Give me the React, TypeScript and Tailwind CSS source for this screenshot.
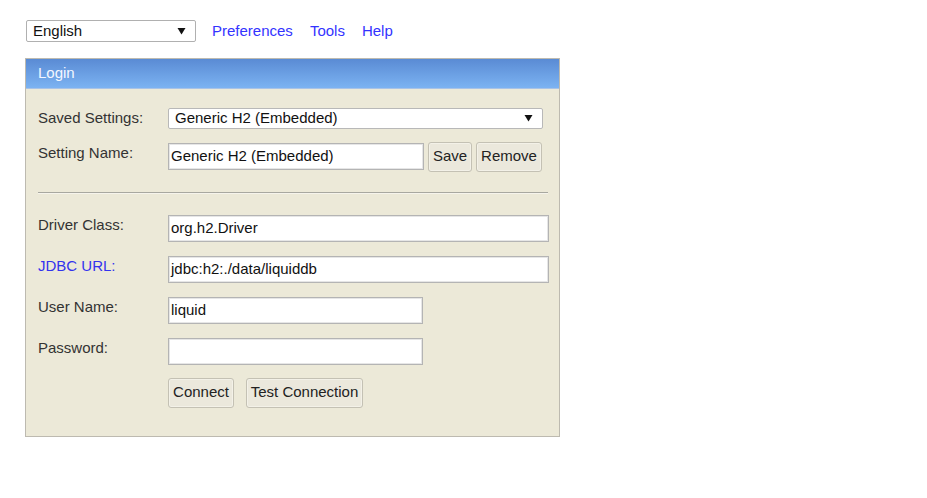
import React from "react";

const font = { fontFamily: '"Liberation Sans", Arial, sans-serif' };

function Arrow() {
  return (
    <svg width="9" height="8" viewBox="0 0 9 8" className="absolute right-[9px] top-1/2 -translate-y-1/2">
      <path d="M0.5 1 L8.5 1 L4.5 7.5 Z" fill="#111" />
    </svg>
  );
}

function Label({ children, blue }: { children: React.ReactNode; blue?: boolean }) {
  return (
    <div className={`w-[130px] shrink-0 leading-[18px] pt-[1px] ${blue ? "text-[#3333ee]" : "text-[#333]"}`}>
      {children}
    </div>
  );
}

function Input({ value, w }: { value: string; w: string }) {
  return (
    <div
      className={`${w} h-[27px] bg-white border border-[#b4b4b4] shadow-[inset_0_0_0_1px_#e6e6e6] flex items-center pl-[2px] text-[#111] text-[15px]`}
    >
      {value}
    </div>
  );
}

function Btn({ children, w }: { children: React.ReactNode; w: string }) {
  return (
    <div
      className={`${w} h-[30px] rounded-[3px] border border-[#c4c1b4] bg-[#ebe8dc] shadow-[inset_0_0_0_1px_#f3f1e8] flex items-center justify-center text-[#222] text-[15px]`}
    >
      {children}
    </div>
  );
}

export default function App() {
  return (
    <div className="w-[927px] h-[498px] bg-white text-[15px]" style={font}>
      <div className="pt-[20px] pl-[26px] flex items-center">
        <div className="relative w-[170px] h-[22px] border border-[#b0b0b0] rounded-[2px] bg-white flex items-center pl-[6px] text-[#111]">
          English
          <Arrow />
        </div>
        <div className="flex items-center text-[#3333ff] ml-[16px] gap-[17px]">
          <span>Preferences</span>
          <span>Tools</span>
          <span>Help</span>
        </div>
      </div>

      <div className="mt-[15px] ml-[25px] w-[535px] h-[379px] border border-[#bdbab0] bg-[#ece9d8] flex flex-col">
        <div className="h-[30px] bg-gradient-to-b from-[#5a8bd4] to-[#7cb3f2] border-b border-[#a9c3e6] flex items-center pl-[12px] text-[#f4f7ff] text-[15px]">
          Login
        </div>
        <div className="pl-[12px] pt-[19px] flex flex-col">
          <div className="flex">
            <Label>Saved Settings:</Label>
            <div className="relative w-[375px] h-[21px] bg-white border border-[#b8b8b8] rounded-[2px] flex items-center pl-[6px] text-[#111]">
              Generic H2 (Embedded)
              <Arrow />
            </div>
          </div>

          <div className="flex mt-[13px]">
            <div className="pt-[1px]">
              <Label>Setting Name:</Label>
            </div>
            <div className="mt-[1px]">
              <Input value="Generic H2 (Embedded)" w="w-[256px]" />
            </div>
            <div className="ml-[4px]">
              <Btn w="w-[44px]">Save</Btn>
            </div>
            <div className="ml-[4px]">
              <Btn w="w-[66px]">Remove</Btn>
            </div>
          </div>

          <div className="mt-[20px] w-[510px] h-[2px] border-t border-[#a8a8a0] border-b border-b-[#f6f4ec]" />

          <div className="flex mt-[21px]">
            <Label>Driver Class:</Label>
            <Input value="org.h2.Driver" w="w-[381px]" />
          </div>
          <div className="flex mt-[14px]">
            <Label blue>JDBC URL:</Label>
            <Input value="jdbc:h2:./data/liquiddb" w="w-[381px]" />
          </div>
          <div className="flex mt-[14px]">
            <Label>User Name:</Label>
            <Input value="liquid" w="w-[255px]" />
          </div>
          <div className="flex mt-[14px]">
            <Label>Password:</Label>
            <Input value="" w="w-[255px]" />
          </div>
          <div className="flex mt-[13px] pl-[130px] gap-[12px]">
            <Btn w="w-[66px]">Connect</Btn>
            <Btn w="w-[117px]">Test Connection</Btn>
          </div>
        </div>
      </div>
    </div>
  );
}
